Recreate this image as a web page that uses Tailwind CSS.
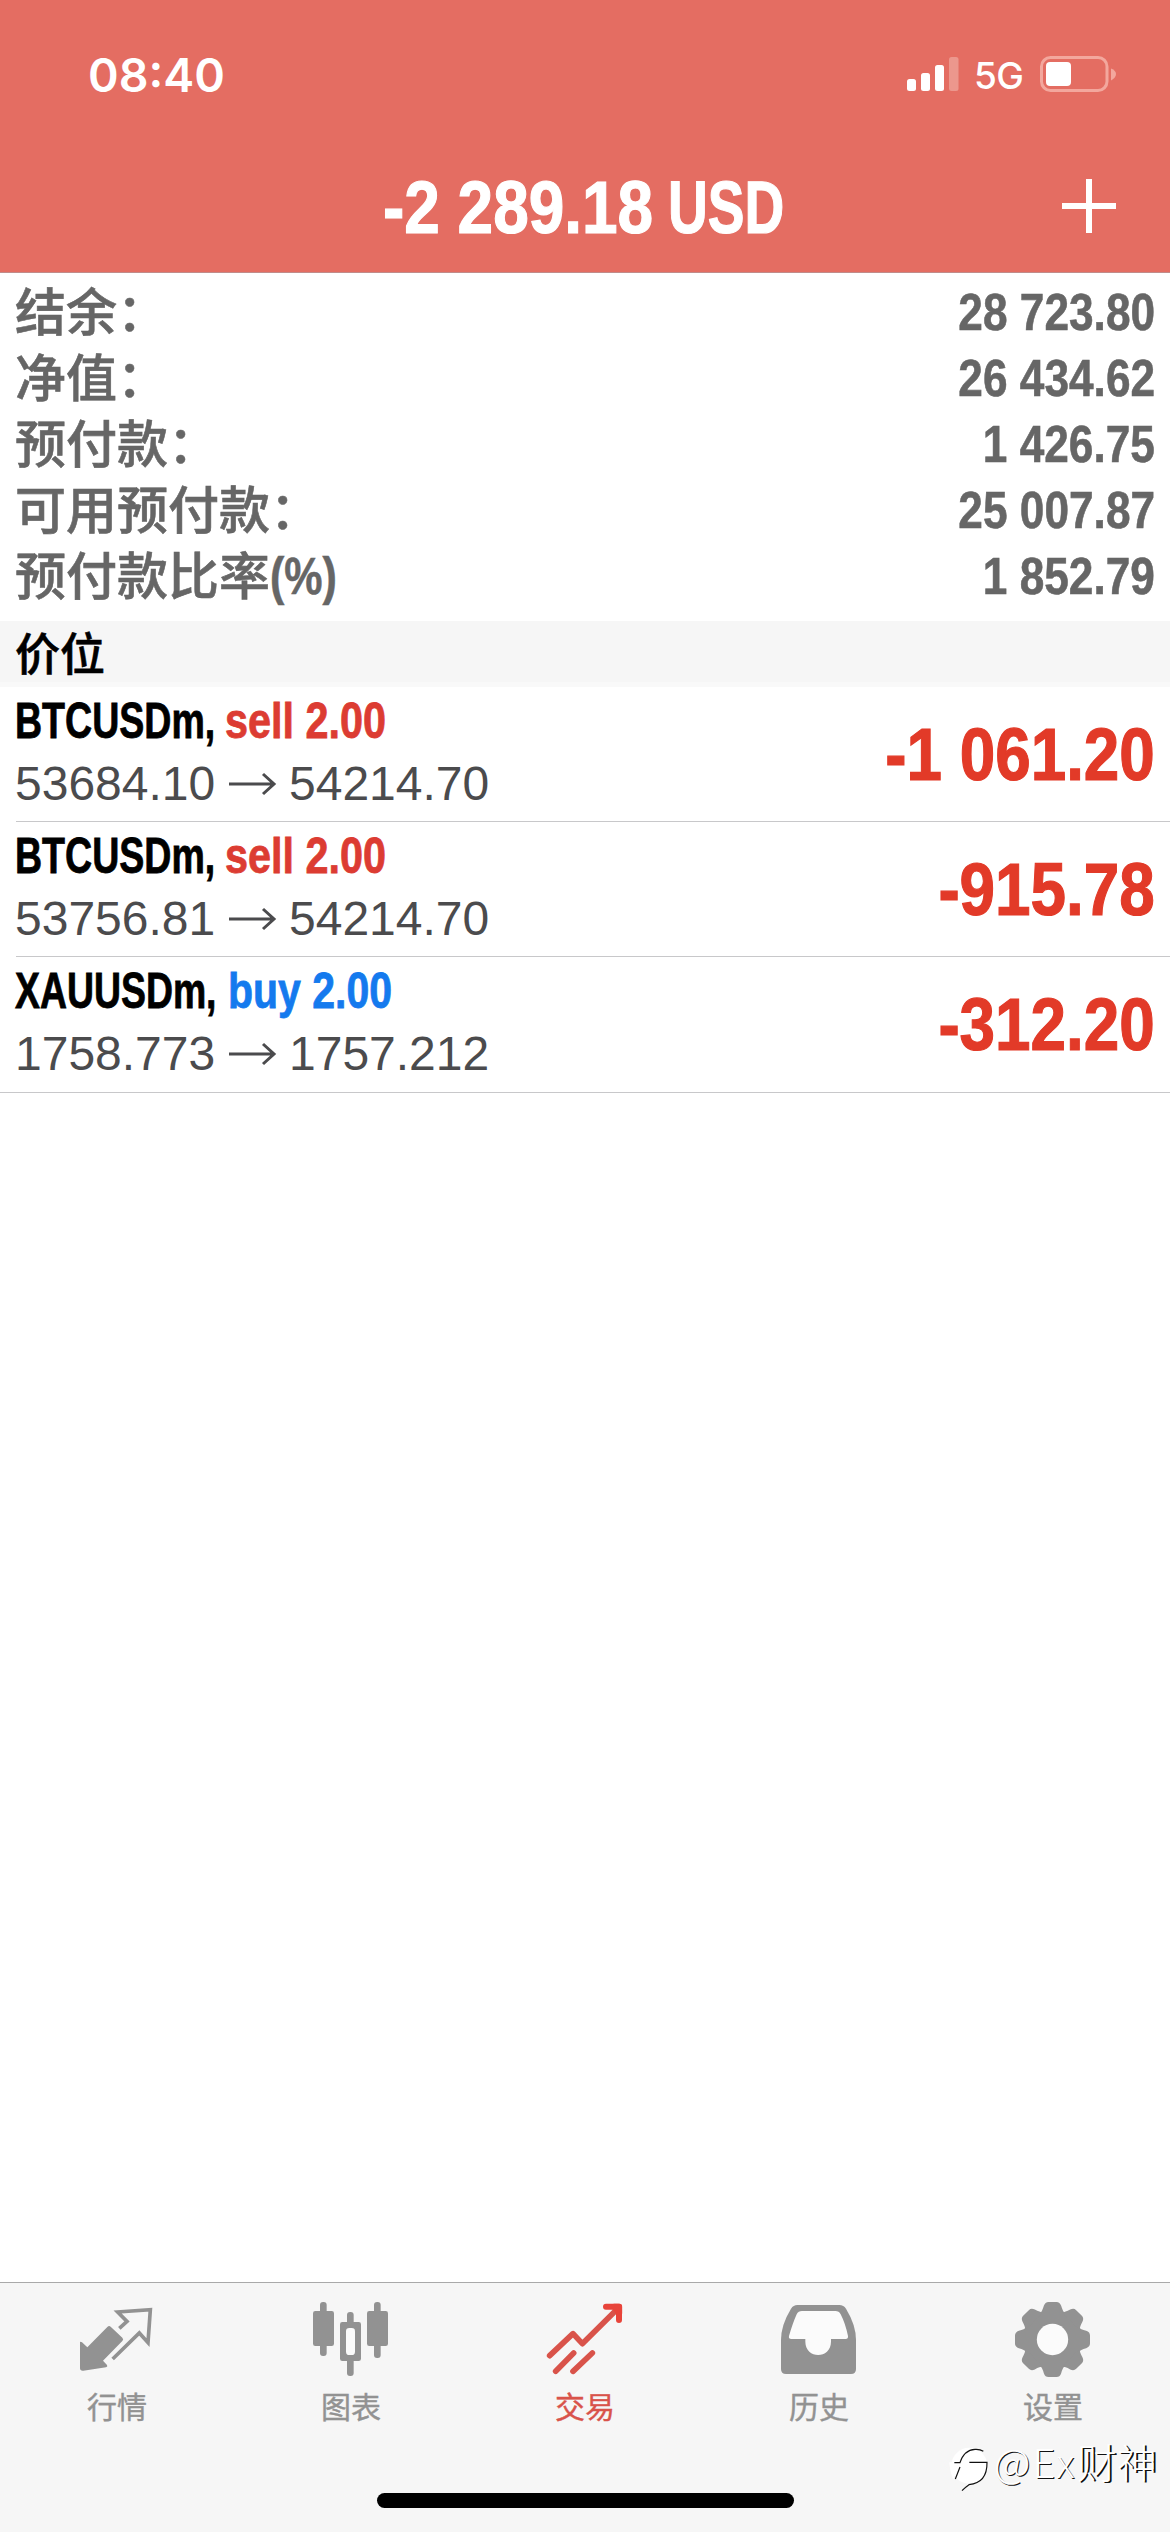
<!DOCTYPE html>
<html lang="zh-CN">
<head>
<meta charset="utf-8">
<title>交易</title>
<script src="https://cdn.jsdelivr.net/npm/@tailwindcss/browser@4"></script>
</head>
<body class="bg-white">
<div class="relative flex h-[2532px] w-[1170px] flex-col overflow-hidden bg-white font-['Liberation_Sans','Noto_Sans_CJK_SC',sans-serif]">

  <header class="h-[273px] shrink-0 border-b border-[#c08c8a] bg-[#e46d62] text-white">
    <div class="flex h-[140px] items-start justify-between pr-[54px] pl-[88px] pt-[44px]">
      <span class="font-['Inter',sans-serif] text-[46.5px] leading-[62px] font-semibold">08:40</span>
      <div class="flex items-start pt-[12px]">
        <svg class="h-[36px] w-[52px]" viewBox="0 0 52 36" fill="#fff">
          <rect x="0" y="23" width="9" height="12" rx="2.5"/><rect x="14" y="17" width="9" height="18" rx="2.5"/>
          <rect x="28" y="9" width="9" height="26" rx="2.5"/><rect x="42" y="1" width="9.5" height="34" rx="2.5" fill="#ec978d"/>
        </svg>
        <span class="ml-[15px] w-[66px] font-['Inter',sans-serif] text-[37px] leading-[40px] font-medium tracking-[-.5px]">5G</span>
        <svg class="h-[36px] w-[76px]" viewBox="0 0 76 36">
          <rect x="1.5" y="1.5" width="65.5" height="33" rx="9" fill="none" stroke="#f3a79d" stroke-width="3"/>
          <rect x="6" y="6" width="25" height="24" rx="4" fill="#fff"/>
          <path d="M71 12.500Q76 14.500 76 18T71 24.500Z" fill="#f3a79d"/>
        </svg>
      </div>
    </div>
    <div class="flex h-[132px] text-[74.7px] leading-[134px] font-bold whitespace-nowrap [-webkit-text-stroke:1.2px]">
      <div class="w-[120px]"></div>
      <h1 class="flex flex-1 justify-center">
        <span class="w-[285px]"><span class="inline-block origin-left scale-x-[.856]">-2 289.18</span></span>
        <span class="w-[119px]"><span class="inline-block origin-left scale-x-[.737]">USD</span></span>
      </h1>
      <div class="flex w-[120px] pt-[39px] pl-[12px]">
        <svg class="h-[54px] w-[54px]" viewBox="0 0 54 54" fill="#fff"><rect x="24" width="6" height="54"/><rect y="24" width="54" height="6"/></svg>
      </div>
    </div>
  </header>

  <section class="flex h-[348px] shrink-0 flex-col pt-[6px] pr-[15px] pl-[15px] font-bold text-[#666] [-webkit-text-stroke:.6px]">
    <div class="flex h-[66px] justify-between whitespace-nowrap"><span class="text-[51px] leading-[69px] font-medium">结余：</span><span class="origin-right scale-x-[.844] text-[52.4px] leading-[66px]">28 723.80</span></div>
    <div class="flex h-[66px] justify-between whitespace-nowrap"><span class="text-[51px] leading-[69px] font-medium">净值：</span><span class="origin-right scale-x-[.844] text-[52.4px] leading-[66px]">26 434.62</span></div>
    <div class="flex h-[66px] justify-between whitespace-nowrap"><span class="text-[51px] leading-[69px] font-medium">预付款：</span><span class="origin-right scale-x-[.844] text-[52.4px] leading-[66px]">1 426.75</span></div>
    <div class="flex h-[66px] justify-between whitespace-nowrap"><span class="text-[51px] leading-[69px] font-medium">可用预付款：</span><span class="origin-right scale-x-[.844] text-[52.4px] leading-[66px]">25 007.87</span></div>
    <div class="flex h-[66px] justify-between whitespace-nowrap"><span class="flex"><span class="text-[51px] leading-[69px] font-medium">预付款比率</span><span class="origin-left scale-x-[.82] text-[52.4px] leading-[66px]">(%)</span></span><span class="origin-right scale-x-[.844] text-[52.4px] leading-[66px]">1 852.79</span></div>
  </section>

  <h2 class="h-[66px] shrink-0 border-b-[5px] border-[#f9f9f9] bg-[#f6f6f6] pl-[15px] text-[45px] leading-[69px] font-medium text-black [-webkit-text-stroke:.6px]">价位</h2>

  <main class="flex-1">
    <div class="pl-[16px]">
      <div class="flex h-[135px] justify-between border-b border-[#c8c8ca] pr-[15px]">
        <div class="-ml-px pt-[4px] whitespace-nowrap">
          <div class="flex h-[60px] text-[49.4px] leading-[60px] font-bold [-webkit-text-stroke:.8px]"><span class="w-[210px] text-black"><span class="inline-block origin-left scale-x-[.76]">BTCUSDm,</span></span><span class="origin-left scale-x-[.838] text-[#dc3c32]">sell 2.00</span></div>
          <div class="flex text-[48px] leading-[66px] text-[#4b4b4d]"><span class="w-[214px]">53684.10</span><svg class="mt-[21px] h-[24px] w-[60px]" viewBox="0 0 60 24" fill="none" stroke="#4b4b4d" stroke-width="3"><path d="M0 12H45M34 2L45 12L34 22"/></svg><span>54214.70</span></div>
        </div>
        <div class="origin-right scale-x-[.856] text-[74.5px] leading-[136px] font-bold whitespace-nowrap text-[#e23a28] [-webkit-text-stroke:1.2px]">-1 061.20</div>
      </div>
      <div class="flex h-[135px] justify-between border-b border-[#c8c8ca] pr-[15px]">
        <div class="-ml-px pt-[4px] whitespace-nowrap">
          <div class="flex h-[60px] text-[49.4px] leading-[60px] font-bold [-webkit-text-stroke:.8px]"><span class="w-[210px] text-black"><span class="inline-block origin-left scale-x-[.76]">BTCUSDm,</span></span><span class="origin-left scale-x-[.838] text-[#dc3c32]">sell 2.00</span></div>
          <div class="flex text-[48px] leading-[66px] text-[#4b4b4d]"><span class="w-[214px]">53756.81</span><svg class="mt-[21px] h-[24px] w-[60px]" viewBox="0 0 60 24" fill="none" stroke="#4b4b4d" stroke-width="3"><path d="M0 12H45M34 2L45 12L34 22"/></svg><span>54214.70</span></div>
        </div>
        <div class="origin-right scale-x-[.856] text-[74.5px] leading-[136px] font-bold whitespace-nowrap text-[#e23a28] [-webkit-text-stroke:1.2px]">-915.78</div>
      </div>
    </div>
    <div class="flex h-[136px] justify-between border-b border-[#c8c8ca] pr-[15px] pl-[16px]">
      <div class="-ml-px pt-[4px] whitespace-nowrap">
        <div class="flex h-[60px] text-[49.4px] leading-[60px] font-bold [-webkit-text-stroke:.8px]"><span class="w-[213px] text-black"><span class="inline-block origin-left scale-x-[.757]">XAUUSDm,</span></span><span class="origin-left scale-x-[.83] text-[#147aee]">buy 2.00</span></div>
        <div class="flex text-[48px] leading-[66px] text-[#4b4b4d]"><span class="w-[214px]">1758.773</span><svg class="mt-[21px] h-[24px] w-[60px]" viewBox="0 0 60 24" fill="none" stroke="#4b4b4d" stroke-width="3"><path d="M0 12H45M34 2L45 12L34 22"/></svg><span>1757.212</span></div>
      </div>
      <div class="origin-right scale-x-[.856] text-[74.5px] leading-[136px] font-bold whitespace-nowrap text-[#e23a28] [-webkit-text-stroke:1.2px]">-312.20</div>
    </div>
  </main>

  <footer class="flex h-[250px] shrink-0 flex-col items-center border-t border-[#a9a9a9] bg-[#f6f6f6]">
    <nav class="grid h-[210px] w-full grid-cols-5 text-[30px] leading-[44px] text-[#929292] [-webkit-text-stroke:.4px]">
      <div class="flex flex-col items-center pt-[17px]">
        <svg class="h-[78px] w-[78px]" viewBox="234 120 234 234" fill="#929292">
          <path d="M240 246Q243 244 246 247L262 262L322 201Q327 196 332 200L367 233Q372 238 367 243L309 302L321 315Q324 320 318 322L250 332Q240 333 240 325Z"/>
          <path d="M358 205L381 184L353 156L451 149L444 248L418 219L338 297" fill="none" stroke="#929292" stroke-width="11"/>
        </svg>
        <span class="mt-[8px]">行情</span>
      </div>
      <div class="flex flex-col items-center pt-[17px]">
        <svg class="h-[78px] w-[78px]" viewBox="936 120 234 234" fill="#929292">
          <rect x="960" y="126" width="20" height="162" rx="9"/><rect x="939" y="153" width="63" height="105" rx="7"/>
          <rect x="1122" y="126" width="20" height="168" rx="9"/><rect x="1101" y="153" width="63" height="105" rx="7"/>
          <rect x="1041" y="156" width="20" height="192" rx="9"/><rect x="1020" y="186" width="63" height="117" rx="7"/>
          <rect x="1038" y="204" width="27" height="81" rx="10" fill="#fbfbfb"/>
        </svg>
        <span class="mt-[8px]">图表</span>
      </div>
      <div class="flex flex-col items-center pt-[17px] text-[#d9534a]">
        <svg class="h-[78px] w-[78px]" viewBox="288 120 234 234" fill="none" stroke="#d9534a" stroke-width="17" stroke-linecap="round" stroke-linejoin="round">
          <path d="M299 287L369 221L397 251L502 147"/><path d="M468 140H507V180" stroke="#e8443a" stroke-width="18"/><path d="M492 140H508V160Z" fill="#e8443a" stroke="#e8443a"/>
          <path d="M317 334L371 279M369 334L427 279"/>
        </svg>
        <span class="mt-[8px]">交易</span>
      </div>
      <div class="flex flex-col items-center pt-[17px]">
        <svg class="h-[78px] w-[78px]" viewBox="990 120 234 234" fill="#929292">
          <path d="M1042 135H1168Q1181 135 1188 146Q1218 195 1218 240V327Q1218 342 1203 342H1008Q993 342 993 327V240Q993 195 1023 146Q1030 135 1042 135Z"/>
          <path d="M1056 153H1156Q1167 153 1172 163Q1186 190 1194 228Q1195 237 1187 237H1143V245C1143 298 1066 298 1066 245V237H1024Q1015 237 1017 228Q1028 190 1040 163Q1045 153 1056 153Z" fill="#fbfbfb"/>
        </svg>
        <span class="mt-[8px]">历史</span>
      </div>
      <div class="flex flex-col items-center pt-[17px]">
        <svg class="h-[78px] w-[78px]" viewBox="342 120 234 234" fill="#929292">
          <g transform="translate(457.500 238.500)">
            <circle r="89"/>
            <path id="tooth" d="M-37 -78Q-31 -84 -26 -101Q-22 -112.500 -12 -112.500H12Q22 -112.500 26 -101Q31 -84 37 -78Z"/>
            <use href="#tooth" transform="rotate(45)"/><use href="#tooth" transform="rotate(90)"/><use href="#tooth" transform="rotate(135)"/><use href="#tooth" transform="rotate(180)"/><use href="#tooth" transform="rotate(225)"/><use href="#tooth" transform="rotate(270)"/><use href="#tooth" transform="rotate(315)"/>
            <circle r="47" fill="#fbfbfb"/>
          </g>
        </svg>
        <span class="mt-[8px]">设置</span>
      </div>
    </nav>
    <div class="h-[15px] w-[417px] rounded-full bg-black"></div>
  </footer>

  <div class="absolute top-[2433px] left-[948px] flex items-start whitespace-nowrap">
    <svg class="mt-[12px] h-[48px] w-[46px]" viewBox="144 558 138 144" fill="none">
      <circle cx="208" cy="620" r="54" fill="#fff"/><path d="M148 610H175L160 662Q150 640 148 610Z" fill="#fff"/>
      <path d="M163 611H180Q192 573 225 571Q240 570 250 577M208 610H261Q262 672 207 677Q198 683 186 695M180 624L166 660" stroke="#111" stroke-width="3.500"/>
    </svg>
    <span class="font-['Noto_Sans_CJK_SC',sans-serif] text-[40px] leading-[56px] font-light tracking-[2px] text-white [text-shadow:1px_1px_0_#111]">@Ex<span class="tracking-normal [text-shadow:2px_1px_0_#111]">财神</span></span>
  </div>
</div>
</body>
</html>
